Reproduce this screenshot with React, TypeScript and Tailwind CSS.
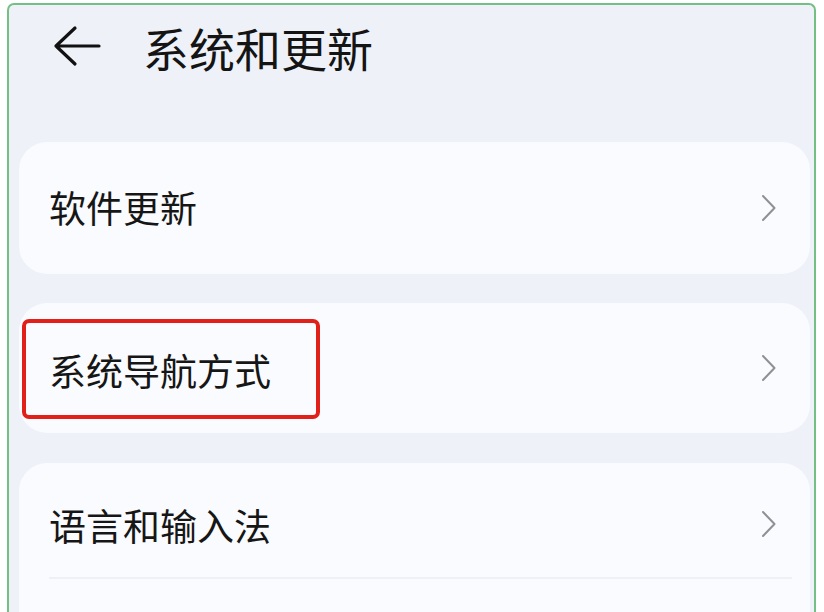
import React from "react";

const font = { fontFamily: '"Noto Sans CJK SC", "Noto Sans", sans-serif' };

function Chevron() {
  return (
    <svg width="16" height="28" viewBox="0 0 16 28" className="shrink-0">
      <path d="M2 2 L13.5 14 L2 26" fill="none" stroke="#8f9094" strokeWidth="2" strokeLinecap="round" strokeLinejoin="round" />
    </svg>
  );
}

export default function App() {
  return (
    <div className="w-[824px] h-[612px] bg-white overflow-hidden pt-[3px] pl-[7px] pr-[8px]" style={font}>
      <div className="h-full border-[2.5px] border-b-0 border-[#74c084] rounded-t-[7px] bg-[#eef1f8] flex flex-col pl-[10px] pr-[4px]">
        <div className="h-[137px] shrink-0 flex items-start pt-[14px] pl-[34px]">
          <svg width="48" height="42" viewBox="0 0 48 42" className="mt-[6px]">
            <path d="M22 3 L3 21 L22 39 M3 21 L46 21" fill="none" stroke="#111" strokeWidth="3.2" strokeLinecap="round" strokeLinejoin="round" />
          </svg>
          <div className="ml-[42px] text-[46px] leading-[56px] text-[#141414]">系统和更新</div>
        </div>

        <div className="h-[132px] shrink-0 rounded-[28px] bg-[#fafbfe] flex items-center pl-[30px] pr-[33px]">
          <div className="flex-1 text-[37px] leading-[44px] text-[#161616] -mt-[2px]">软件更新</div>
          <Chevron />
        </div>

        <div className="relative mt-[29px] h-[130px] shrink-0 rounded-[28px] bg-[#fafbfe] flex items-center pl-[30px] pr-[33px]">
          <div className="flex-1 text-[37px] leading-[44px] text-[#161616] mt-[4px]">系统导航方式</div>
          <Chevron />
          <div className="absolute left-[3px] top-[16px] w-[298px] h-[100px] border-4 border-[#e1201a] rounded-[7px]" />
        </div>

        <div className="mt-[30px] flex-1 rounded-t-[28px] bg-[#fafbfe] pl-[30px] pr-[33px] flex flex-col">
          <div className="h-[116px] flex items-center border-b-2 border-[#eef0f5] -mr-[15px] pr-[15px]">
            <div className="flex-1 text-[37px] leading-[44px] text-[#161616] mt-[10px]">语言和输入法</div>
            <div className="mt-[8px]"><Chevron /></div>
          </div>
        </div>
      </div>
    </div>
  );
}
